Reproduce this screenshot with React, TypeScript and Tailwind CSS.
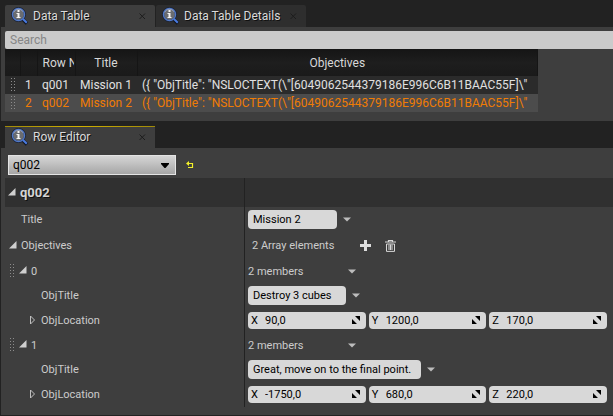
import { useState } from "react";
import type { ReactNode } from "react";

function InfoLens() {
  return (
    <svg width="18" height="18" viewBox="0 0 18 18" className="shrink-0" aria-hidden="true">
      <path d="M12 12.500 16 16.500" stroke="#10131c" strokeWidth="3.400" />
      <circle cx="7.500" cy="7.500" r="6.400" fill="#6a6c70" stroke="#1a2236" strokeWidth="2" />
      <circle cx="7.500" cy="7.500" r="6" fill="none" stroke="#5078c8" strokeWidth="1.400" />
      <path d="M2.600 5.400A5.400 5.400 0 0 1 12 4.600" stroke="#98a2b8" strokeWidth="1" fill="none" />
      <path d="M12 12 15.800 15.800" stroke="#4a7be0" strokeWidth="2" />
      <path d="M6.500 3h2v2h-2zM5.500 6h3v4h1v1h-4v-1h1V7h-1z" fill="#f4f4f4" />
    </svg>
  );
}

function Tab({ label, active, focused }: { label: string; active?: boolean; focused?: boolean }) {
  return (
    <div
      className={
        "relative flex h-[22px] w-[150px] items-center rounded-t-xs pr-2 pl-1.5 " +
        (active ? "bg-[#3e3e3e]" : "bg-[#2e2e2e]")
      }
    >
      {focused && (
        <span className="absolute inset-x-0 top-0 h-px bg-linear-to-r from-[#a08a08] via-[#d0b000] to-[#a08a08]" />
      )}
      <button type="button" className="flex flex-1 items-center gap-1 text-left whitespace-nowrap text-[#dadada] [text-shadow:1px_1px_0_#111]">
        <InfoLens />
        {label}
      </button>
      <button type="button" aria-label={"Close " + label} className="shrink-0">
        <svg width="9" height="9" viewBox="0 0 9 9" aria-hidden="true">
          <path d="M1.500 1.500 7 7M7 1.500 1.500 7" stroke="#1c1c1c" strokeWidth="1" />
        </svg>
      </button>
    </div>
  );
}

function Grip() {
  return (
    <svg width="5" height="14" viewBox="0 0 5 14" className="shrink-0" aria-hidden="true">
      {[0, 3, 6, 9, 12].map((y) => (
        <g key={y} fill="#8c8c8c">
          <rect x="0" y={y} width="1" height="1" />
          <rect x="3" y={y} width="1" height="1" />
        </g>
      ))}
    </svg>
  );
}

function Expander({ open, label }: { open: boolean; label: string }) {
  return (
    <button type="button" aria-label={"Toggle " + label} aria-expanded={open} className="shrink-0 pb-0.5">
      <svg width="8" height="10" viewBox="0 0 8 10" aria-hidden="true">
        {open ? (
          <path d="M7.500 1v7.500H0z" fill="#cfcfcf" />
        ) : (
          <path d="M1.500 1v8l4-4z" fill="none" stroke="#c0c0c0" strokeWidth="1" />
        )}
      </svg>
    </button>
  );
}

function MenuArrow({ label }: { label: string }) {
  return (
    <button type="button" aria-label={label} className="shrink-0">
      <svg width="8" height="5" viewBox="0 0 8 5" aria-hidden="true">
        <path d="M0 .5h8l-4 4z" fill="#bdbdbd" />
      </svg>
    </button>
  );
}

function PropertyRow({
  name,
  indent,
  height = "h-[25px]",
  grip,
  open,
  children,
}: {
  name: string;
  indent: string;
  height?: string;
  grip?: boolean;
  open?: boolean;
  children: ReactNode;
}) {
  return (
    <div className={"flex text-[11px] text-[#cccccc] " + height}>
      <div className="flex w-60 shrink-0 items-center border-r border-[#222]">
        <div className={"flex items-center justify-end gap-1 " + indent}>
          {grip && <Grip />}
          {open !== undefined && <Expander open={open} label={name} />}
        </div>
        <span className="pt-0.5 pl-1">{name}</span>
      </div>
      <div className="flex min-w-0 flex-1 items-center pr-1.5 pl-[3px]">{children}</div>
    </div>
  );
}

function TextValue({ label, value, width }: { label: string; value: string; width: string }) {
  return (
    <div className="flex items-center gap-1.5">
      <input
        aria-label={label}
        defaultValue={value}
        className={"h-[19px] rounded-sm bg-[#d8d8d8] px-[5px] text-black outline-none " + width}
      />
      <MenuArrow label={label + " options"} />
    </div>
  );
}

function VectorValue({ values }: { values: string[] }) {
  return (
    <div className="flex flex-1 gap-[3px]">
      {["X", "Y", "Z"].map((axis, i) => (
        <label
          key={axis}
          className="flex h-[17px] min-w-0 flex-1 items-center rounded-sm bg-[#d8d8d8] pr-1.5 pl-[3px] text-black"
        >
          <span className="w-3.5 shrink-0 pt-0.5">{axis}</span>
          <input defaultValue={values[i]} className="w-full min-w-0 flex-1 pt-0.5 outline-none" />
          <svg width="8" height="8" viewBox="0 0 8 8" className="mb-px shrink-0" aria-hidden="true">
            <path d="M3 0h5v5zM0 3v5h5z" fill="#000" />
          </svg>
        </label>
      ))}
    </div>
  );
}

function Members() {
  return (
    <>
      <span className="w-[100px] pt-0.5">2 members</span>
      <MenuArrow label="Element options" />
    </>
  );
}

const text = '({ "ObjTitle": "NSLOCTEXT(\\"[6049062544379186E996C6B11BAAC55F]\\"';
const rows = [
  { id: "q001", title: "Mission 1" },
  { id: "q002", title: "Mission 2" },
];
const elements = [
  { title: "Destroy 3 cubes", width: "w-[98px]", location: ["90,0", "1200,0", "170,0"] },
  { title: "Great, move on to the final point.", width: "w-[173px]", location: ["-1750,0", "680,0", "220,0"] },
];

export default function App() {
  const [selected, setSelected] = useState("q002");
  const head = "overflow-hidden border-r border-[#151515] p-0 font-normal whitespace-nowrap";
  const cell = "overflow-hidden p-0 pl-[5px] whitespace-nowrap";
  return (
    <div className="flex min-h-screen flex-col bg-[#222] pb-px pl-px font-['Roboto',sans-serif] text-xs">
      <div className="flex gap-px pt-[5px] pl-1">
        <Tab label="Data Table" active />
        <Tab label="Data Table Details" />
      </div>
      <section className="bg-[#3e3e3e] pt-1 pb-[9px] pl-1">
        <input
          type="search"
          aria-label="Search"
          placeholder="Search"
          className="block h-[18px] w-full rounded-l-xs bg-[#cbcbcb] px-[5px] text-black outline-none placeholder:text-[#868686]"
        />
        <table className="w-[533px] table-fixed border-collapse">
          <colgroup>
            <col className="w-[15px]" />
            <col className="w-[17px]" />
            <col className="w-[38px]" />
            <col className="w-[62px]" />
            <col />
          </colgroup>
          <thead>
            <tr className="h-[27px] bg-linear-to-b from-[#151515] via-[#1e1e1e] to-[#1a1a1a] text-[#d8d8d8]">
              <th className={head} />
              <th className={head} />
              <th className={head + " pl-[5px] text-left"}>
                <span className="block w-[31px] overflow-hidden">Row N</span>
              </th>
              <th className={head}>Title</th>
              <th className={head}>Objectives</th>
            </tr>
          </thead>
          <tbody>
            {rows.map((row, i) => (
              <tr
                key={row.id}
                onClick={() => setSelected(row.id)}
                className={"h-[18px] " + (row.id === selected ? "bg-[#4c4c4c] text-[#f07c04]" : "bg-[#2b2b2b] text-[#e0e0e0]")}
              >
                <td className="p-0 pl-1.5">
                  <Grip />
                </td>
                <td className={cell}>{i + 1}</td>
                <td className={cell}>{row.id}</td>
                <td className={cell}>{row.title}</td>
                <td className={cell + " pr-1"}>
                  <div className="overflow-hidden">{text}</div>
                </td>
              </tr>
            ))}
          </tbody>
        </table>
      </section>

      <div className="flex pt-[5px] pl-1">
        <Tab label="Row Editor" active focused />
      </div>
      <section className="flex-1 bg-[#3e3e3e] pl-1">
        <div className="flex h-[30px] items-center gap-2.5 pt-1 pl-[3px]">
          <div className="relative">
            <select
              aria-label="Row"
              value={selected}
              onChange={(e) => setSelected(e.target.value)}
              className="block h-5 w-[168px] appearance-none border border-[#e4e4e4] bg-linear-to-b from-[#d6d6d6] to-[#a6a6a6] pl-1 text-black outline-none"
            >
              {rows.map((row) => (
                <option key={row.id}>{row.id}</option>
              ))}
            </select>
            <svg width="8" height="5" viewBox="0 0 8 5" className="pointer-events-none absolute top-2 right-[7px]" aria-hidden="true">
              <path d="M0 0h8v1L4.500 5h-1L0 1z" fill="#000" />
            </svg>
          </div>
          <button type="button" aria-label="Reset to default">
            <svg width="8" height="8" viewBox="0 0 8 8" aria-hidden="true">
              <path d="M1 2.500h5.500v4H2" fill="none" stroke="#f2f02a" strokeWidth="1.200" />
              <path d="M3 0v5L0 2.500z" fill="#f2f02a" />
            </svg>
          </button>
        </div>

        <div className="flex h-[29px] bg-[#303030] text-[13px] font-bold text-[#d4d4d4] [text-shadow:1px_1px_0_#111]">
          <h2 className="flex w-60 shrink-0 items-center gap-1 border-r border-[#222] pl-[3px]">
            <Expander open label="q002" />
            q002
          </h2>
        </div>

        <PropertyRow name="Title" indent="w-3">
          <TextValue label="Title" value="Mission 2" width="w-[89px]" />
        </PropertyRow>
        <PropertyRow name="Objectives" indent="w-3" height="h-[27px]" open>
          <span className="w-[108px] pt-0.5 pl-1">2 Array elements</span>
          <button type="button" aria-label="Add element" className="mr-3.5 ml-1">
            <svg width="11" height="11" viewBox="0 0 11 11" aria-hidden="true">
              <path d="M4 0h3v4h4v3H7v4H4V7H0V4h4z" fill="#dedede" />
            </svg>
          </button>
          <button type="button" aria-label="Remove all elements">
            <svg width="11" height="12" viewBox="0 0 11 12" aria-hidden="true">
              <path d="M3.500 1.500v-1h4v1M0 2h11" fill="none" stroke="#d8d8d8" strokeWidth="1.200" />
              <path d="M1.500 4v7.400h8V4zM4 4.500v5.500M5.500 4.500v5.500M7 4.500v5.500" fill="none" stroke="#d8d8d8" strokeWidth="1" />
            </svg>
          </button>
        </PropertyRow>
        {elements.map((element, i) => (
          <div key={element.title}>
            <PropertyRow name={String(i)} indent="w-[22px]" height="h-6" grip open>
              <Members />
            </PropertyRow>
            <PropertyRow name="ObjTitle" indent="w-8">
              <TextValue label="ObjTitle" value={element.title} width={element.width} />
            </PropertyRow>
            <PropertyRow name="ObjLocation" indent="w-8" open={false}>
              <VectorValue values={element.location} />
            </PropertyRow>
          </div>
        ))}
      </section>
    </div>
  );
}
